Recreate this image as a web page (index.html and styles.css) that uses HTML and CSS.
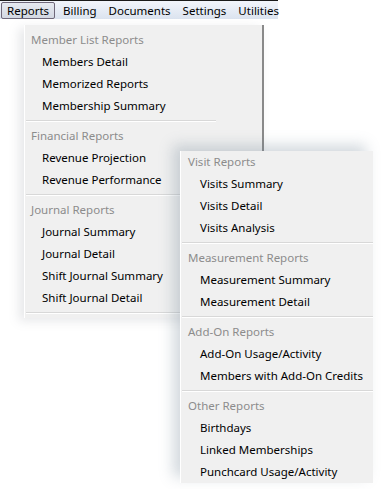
FILE: index.html
```html
<!DOCTYPE html>
<html lang="en">

<head>
    <meta charset="UTF-8">
    <meta name="viewport" content="width=device-width, initial-scale=1.0">
    <title>Reports menu</title>
    <link rel="stylesheet" href="styles.css">
</head>

<body>
    <div class="menubar">
        <span class="top-item active">Reports</span>
        <span class="top-item">Billing</span>
        <span class="top-item">Documents</span>
        <span class="top-item">Settings</span>
        <span class="top-item">Utilities</span>
    </div>

    <!-- first dropdown -->
    <div class="dropdown main-menu">
        <div class="group-title">Member List Reports</div>
        <div class="item">Members Detail</div>
        <div class="item">Memorized Reports</div>
        <div class="item">Membership Summary</div>
        <div class="sep"></div>
        <div class="group-title">Financial Reports</div>
        <div class="item">Revenue Projection</div>
        <div class="item">Revenue Performance</div>
        <div class="sep"></div>
        <div class="group-title">Journal Reports</div>
        <div class="item">Journal Summary</div>
        <div class="item">Journal Detail</div>
        <div class="item">Shift Journal Summary</div>
        <div class="item">Shift Journal Detail</div>
        <div class="sep"></div>
    </div>

    <!-- second dropdown -->
    <div class="dropdown more-menu">
        <div class="group-title">Visit Reports</div>
        <div class="item">Visits Summary</div>
        <div class="item">Visits Detail</div>
        <div class="item">Visits Analysis</div>
        <div class="sep"></div>
        <div class="group-title">Measurement Reports</div>
        <div class="item">Measurement Summary</div>
        <div class="item">Measurement Detail</div>
        <div class="sep"></div>
        <div class="group-title">Add-On Reports</div>
        <div class="item">Add-On Usage/Activity</div>
        <div class="item">Members with Add-On Credits</div>
        <div class="sep"></div>
        <div class="group-title">Other Reports</div>
        <div class="item">Birthdays</div>
        <div class="item">Linked Memberships</div>
        <div class="item">Punchcard Usage/Activity</div>
    </div>
</body>

</html>
```

FILE: styles.css
```css
body {
    margin: 0;
    background-color: #fff;
    font-family: "Noto Sans", "Open Sans", sans-serif;
    font-size: 11.5px;
    color: #000;
    position: relative;
    height: 489px;
    overflow: hidden;
}

.menubar {
    width: 278px;
    height: 18px;
    border-top: 1px solid #1a1a1a;
    background: linear-gradient(#f2f5fb, #dbe3ef);
    display: flex;
    align-items: center;
}

.top-item {
    padding: 0 5px;
    line-height: 15px;
    border: 1px solid transparent;
}

.top-item.active {
    margin-left: 1px;
    margin-right: 2px;
    border-color: #6f687a;
    border-radius: 2px;
    background: linear-gradient(#e6e9f0, #d3d8e2);
}

.dropdown {
    position: absolute;
    background-color: #f0f0f0;
    border-left: 1px solid #fff;
}

.main-menu {
    left: 24px;
    top: 25px;
    width: 237px;
    padding-top: 4px;
    padding-bottom: 1px;
    border-right: 2px solid #8a8a8a;
    box-shadow: -5px 3px 10px rgba(120, 130, 140, 0.18);
}

.more-menu {
    left: 180px;
    top: 151px;
    width: 192px;
    box-shadow: -7px -6px 13px rgba(110, 130, 145, 0.3);
}

.group-title {
    height: 22px;
    line-height: 22px;
    padding-left: 6px;
    color: #8c8c8c;
}

.item {
    height: 22px;
    line-height: 22px;
    padding-left: 17px;
}

.more-menu .group-title {
    padding-left: 7px;
}

.more-menu .item {
    padding-left: 19px;
}

.main-menu .sep {
    margin-right: 46px;
}

.sep {
    height: 8px;
    margin-left: 1px;
    position: relative;
}

.sep::after {
    content: "";
    position: absolute;
    left: 0;
    right: 0;
    top: 3px;
    height: 1px;
    background-color: #d8d8d8;
    border-bottom: 1px solid #fff;
}
```
